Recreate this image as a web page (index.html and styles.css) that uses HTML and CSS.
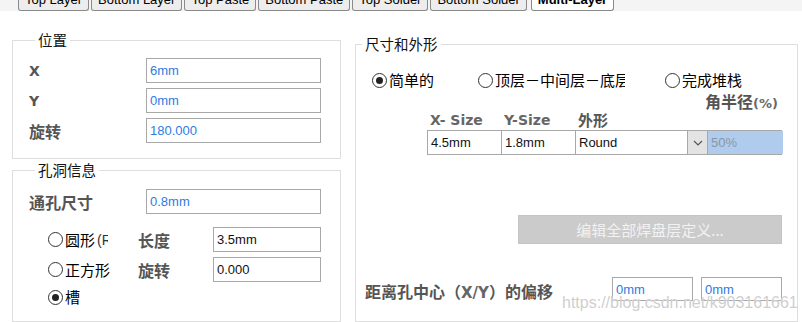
FILE: index.html
```html
<!DOCTYPE html>
<html lang="zh-CN">
<head>
    <meta charset="UTF-8">
    <title>焊盘属性 - Multi-Layer</title>
    <link rel="stylesheet" href="styles.css">
</head>
<body>
    <div class="tabs">
        <div class="tab">Top Layer</div>
        <div class="tab">Bottom Layer</div>
        <div class="tab">Top Paste</div>
        <div class="tab">Bottom Paste</div>
        <div class="tab">Top Solder</div>
        <div class="tab">Bottom Solder</div>
        <div class="tab active">Multi-Layer</div>
    </div>

    <div class="main">
        <div class="left-col">
            <fieldset class="group group-pos">
                <legend>位置</legend>
                <div class="field-row">
                    <span class="label latin">X</span>
                    <input class="box blue" type="text" value="6mm">
                </div>
                <div class="field-row">
                    <span class="label latin">Y</span>
                    <input class="box blue" type="text" value="0mm">
                </div>
                <div class="field-row">
                    <span class="label">旋转</span>
                    <input class="box blue" type="text" value="180.000">
                </div>
            </fieldset>

            <fieldset class="group group-hole">
                <legend>孔洞信息</legend>
                <div class="field-row">
                    <span class="label">通孔尺寸</span>
                    <input class="box blue" type="text" value="0.8mm">
                </div>
                <div class="hole-grid">
                    <label class="radio-opt"><span class="radio"></span>圆形 <span class="clip-r">(R</span></label>
                    <span class="label">长度</span>
                    <input class="box small" type="text" value="3.5mm">

                    <label class="radio-opt"><span class="radio"></span>正方形</label>
                    <span class="label">旋转</span>
                    <input class="box small" type="text" value="0.000">

                    <label class="radio-opt"><span class="radio checked"></span>槽</label>
                </div>
            </fieldset>
        </div>

        <fieldset class="group group-size">
            <legend>尺寸和外形</legend>
            <div class="mode-row">
                <label class="radio-opt opt-simple"><span class="radio checked"></span>简单的</label>
                <label class="radio-opt opt-layers"><span class="radio"></span><span class="clip-text">顶层－中间层－底层</span></label>
                <label class="radio-opt"><span class="radio"></span>完成堆栈</label>
            </div>

            <div class="pad-table">
                <div class="corner-label">角半径<span class="latin">(%)</span></div>
                <div class="pad-head">
                    <span class="latin">X- Size</span>
                    <span class="latin">Y-Size</span>
                    <span>外形</span>
                </div>
                <div class="pad-row">
                    <div class="cell">4.5mm</div>
                    <div class="cell">1.8mm</div>
                    <div class="cell shape-cell">
                        <span>Round</span>
                        <span class="drop-btn">
                            <svg width="10" height="6" viewBox="0 0 10 6"><path d="M1 1 L5 5 L9 1" fill="none" stroke="#555" stroke-width="1.2"/></svg>
                        </span>
                    </div>
                    <div class="cell cell-sel">50%</div>
                </div>
            </div>

            <button class="edit-btn" disabled>编辑全部焊盘层定义...</button>

            <div class="offset-row">
                <span class="label offset-label">距离孔中心（<span class="latin">X/Y</span>）的偏移</span>
                <input class="box blue offset" type="text" value="0mm">
                <input class="box blue offset" type="text" value="0mm">
            </div>
        </fieldset>
    </div>

    <div class="watermark">https://blog.csdn.net/k903161661</div>
</body>
</html>
```

FILE: styles.css
```css
body {
    margin: 0;
    width: 802px;
    height: 322px;
    overflow: hidden;
    background: #fff;
    color: #000;
    font-family: "Noto Sans CJK SC", "Liberation Sans", sans-serif;
    position: relative;
}

/* tab strip, only the lower edge is on screen */
.tabs {
    display: flex;
    align-items: flex-start;
    height: 11px;
    padding-left: 18px;
    background: #f4f4f4;
    overflow: hidden;
}

.tab {
    margin-top: -9px;
    height: 20px;
    box-sizing: border-box;
    padding: 0 6px;
    margin-right: 2px;
    border: 1px solid #8a8a8a;
    border-top: none;
    border-radius: 0 0 3px 3px;
    background: #ededed;
    font: 13px/17px "Liberation Sans", Arial, sans-serif;
    white-space: nowrap;
}

.tab.active {
    background: #fff;
    font-weight: bold;
    margin-left: 2px;
}

.main {
    display: flex;
    gap: 14px;
    padding-left: 12px;
    margin-top: 21px;
}

.left-col {
    width: 329px;
}

.group {
    margin: 0;
    padding: 0;
    border: 1px solid #dedede;
    min-width: 0;
    box-sizing: border-box;
}

.group legend {
    margin-left: 6px;
    padding: 0 3px;
    font-size: 14.5px;
    line-height: 16px;
    color: #111;
}

.group-pos {
    height: 127px;
    padding: 10px 0 0 16px;
}

.group-hole {
    margin-top: 3px;
    height: 160px;
    padding: 11px 0 0 16px;
}

.group-size {
    margin-top: 4px;
    width: 443px;
    height: 286px;
}

.field-row {
    display: flex;
    align-items: center;
    height: 25px;
    margin-bottom: 5px;
}

.label {
    width: 117px;
    font-size: 16px;
    line-height: 18px;
    font-weight: bold;
    color: #555;
}

.latin {
    font-family: "DejaVu Sans", "Liberation Sans", sans-serif;
    font-size: 14px;
}

.box {
    box-sizing: border-box;
    width: 175px;
    height: 25px;
    margin: 0;
    padding: 0 3px;
    border: 1px solid #a8a8a8;
    font: 13px "Liberation Sans", Arial, sans-serif;
    color: #111;
    background: #fff;
}

.box.blue {
    color: #2f7be2;
}

.box.small {
    width: 108px;
}

/* radio rows of the hole group */
.hole-grid {
    display: grid;
    grid-template-columns: 90px 75px 108px;
    grid-template-rows: 25px 25px 20px;
    row-gap: 5px;
    align-items: center;
    margin-top: 13px;
    padding-left: 19px;
}

.hole-grid .label {
    width: auto;
}

.radio-opt {
    display: flex;
    align-items: center;
    font-size: 15px;
    line-height: 18px;
    white-space: nowrap;
}

.radio {
    position: relative;
    width: 15px;
    height: 15px;
    box-sizing: border-box;
    margin-right: 2px;
    border: 1px solid #333;
    border-radius: 50%;
    background: #fff;
    flex-shrink: 0;
}

.radio.checked::after {
    content: "";
    position: absolute;
    left: 3px;
    top: 3px;
    width: 7px;
    height: 7px;
    border-radius: 50%;
    background: #222;
}

.clip-r {
    display: inline-block;
    width: 11px;
    overflow: hidden;
    font: 14px "Liberation Sans", sans-serif;
    color: #333;
    margin-left: 2px;
}

/* size and shape */
.mode-row {
    display: flex;
    height: 16px;
    align-items: center;
    margin-top: 20px;
    padding-left: 16px;
}

.opt-simple {
    width: 106px;
}

.opt-layers {
    width: 187px;
}

.clip-text {
    display: inline-block;
    width: 130px;
    overflow: hidden;
}

.pad-table {
    width: 355px;
    margin: 5px 0 0 71px;
}

.corner-label {
    text-align: right;
    padding-right: 4px;
    font-size: 16px;
    line-height: 16px;
    font-weight: bold;
    color: #555;
}

.corner-label .latin {
    font-size: 13px;
    color: #6a6a6a;
}

.pad-head {
    display: grid;
    grid-template-columns: 74px 74px 132px 75px;
    height: 16px;
    align-items: center;
    font-size: 15px;
    font-weight: bold;
    color: #555;
}

.pad-head span {
    padding-left: 3px;
    line-height: 16px;
}

.pad-head .latin {
    font-size: 14px;
    color: #666;
}

.pad-row {
    display: grid;
    grid-template-columns: 74px 74px 132px 75px;
    height: 25px;
    margin-top: 2px;
    border: 1px solid #a8a8a8;
    box-sizing: border-box;
}

.cell {
    display: flex;
    align-items: center;
    padding-left: 3px;
    border-right: 1px solid #a8a8a8;
    font: 13px "Liberation Sans", Arial, sans-serif;
    color: #111;
}

.shape-cell {
    justify-content: space-between;
    padding-right: 0;
}

.drop-btn {
    display: flex;
    align-items: center;
    justify-content: center;
    width: 20px;
    height: 23px;
    box-sizing: border-box;
    border-left: 1px solid #a8a8a8;
    background: #e3e3e3;
}

.cell-sel {
    border-right: none;
    background: #b0cced;
    color: #8796aa;
}

.edit-btn {
    display: block;
    width: 264px;
    height: 29px;
    margin: 60px 0 0 162px;
    border: 1px solid #c4c4c4;
    background: #cbcbcb;
    color: #f2f2f2;
    font-size: 15px;
    font-family: "Noto Sans CJK SC", sans-serif;
    padding: 0;
}

.offset-row {
    display: flex;
    align-items: center;
    height: 24px;
    margin-top: 33px;
    padding-left: 9px;
}

.offset-label {
    width: 247px;
    margin-top: 6px;
}

.offset-label .latin {
    font-size: 15px;
    color: #666;
}

.box.offset {
    width: 81px;
    height: 24px;
    margin-right: 8px;
}

.watermark {
    position: absolute;
    left: 562px;
    top: 294px;
    font: 16px "Liberation Sans", Arial, sans-serif;
    color: rgba(190, 190, 190, 0.75);
    text-shadow: 0 0 1px #fff;
    white-space: nowrap;
    pointer-events: none;
}
```
